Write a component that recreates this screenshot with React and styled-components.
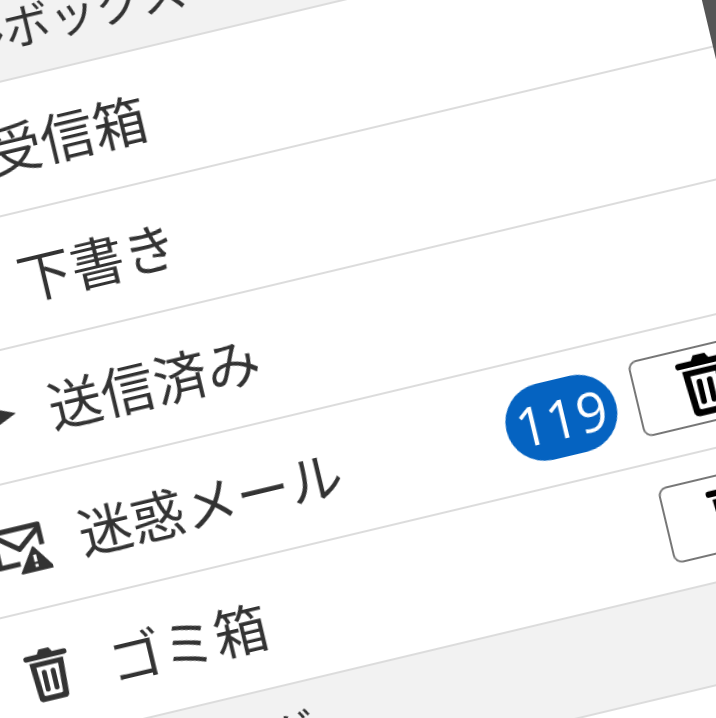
import React from 'react';
import styled, { createGlobalStyle } from 'styled-components';

const GlobalStyle = createGlobalStyle`
  html, body {
    margin: 0;
    padding: 0;
    background: #555;
  }
`;

const Stage = styled.div`
  width: 716px;
  height: 718px;
  overflow: hidden;
  background: #555;
`;

// the whole phone photo is tilted, everything inside is normal flow
const Panel = styled.div`
  width: 894px;
  height: 1000px;
  background: #fff;
  transform-origin: 0 0;
  transform: translate(-210px, 30px) rotate(-13.4deg);
  filter: blur(0.5px);
  font-family: "Noto Sans CJK JP", "Noto Sans", sans-serif;
  color: #333;
`;

const SectionHeader = styled.div`
  height: 100px;
  display: flex;
  align-items: center;
  padding: 0 0 6px 67px;
  background: #f2f2f2;
  border-bottom: 2px solid #dcdcdc;
  box-sizing: border-box;
  font-size: 47px;
`;

const Row = styled.div`
  height: 130.5px;
  display: flex;
  align-items: center;
  padding: 0 15px 0 58px;
  background: #fff;
  border-bottom: 2px solid #dcdcdc;
  box-sizing: border-box;
`;

const IconSlot = styled.div`
  width: 90px;
  display: flex;
  justify-content: center;
  flex-shrink: 0;
  color: #333;
`;

const Label = styled.span`
  margin-left: 16px;
  font-size: 54px;
  flex: 1;
`;

const Badge = styled.span`
  display: flex;
  align-items: center;
  justify-content: center;
  width: 113px;
  height: 78px;
  border-radius: 39px;
  background: #0563c1;
  color: #fff;
  font-family: "Open Sans", sans-serif;
  font-size: 54px;
`;

const TrashButton = styled.button`
  width: 142px;
  height: 78px;
  margin-left: 20px;
  display: flex;
  align-items: center;
  justify-content: center;
  background: #fff;
  color: #000;
  border: 2px solid #777;
  border-radius: 9px;
  padding: 0;
`;

const TrashIcon = ({ size = 65 }) => (
  <svg width={size} height={size} viewBox="0 0 24 24" fill="currentColor">
    <path d="M9.800 1h4.400l1.100 1.900h5a1.100 1.100 0 0 1 0 2.300H3.700a1.100 1.100 0 0 1 0-2.300h5z" />
    <path
      d="M4.600 6.200h14.800l-.9 15.400a2 2 0 0 1-2 1.900H7.500a2 2 0 0 1-2-1.900zM7.200 8.400l.7 12c0 .4.300.7.700.7h6.800c.4 0 .7-.3.700-.7l.7-12z"
      fillRule="evenodd"
    />
    <rect x="9" y="10" width="2.100" height="9.500" rx="1" />
    <rect x="12.900" y="10" width="2.100" height="9.500" rx="1" />
  </svg>
);

const SendIcon = () => (
  <svg width="56" height="56" viewBox="0 0 24 24" fill="currentColor">
    <path d="M3 3l21 9-21 9 2.500-7.500L15 12 5.500 10.500z" />
  </svg>
);

const SpamIcon = () => (
  <svg width="58" height="58" viewBox="0 0 24 24" fill="none" stroke="currentColor" strokeWidth="2.100">
    <path d="M11 19H2.500V4.500h19V13" strokeLinejoin="round" />
    <path d="M3 6l9 7 9-7" strokeLinejoin="round" />
    <path d="M17.500 13.500L24 23H11z" fill="currentColor" strokeWidth="1" strokeLinejoin="round" />
    <path d="M17.500 16.500v3M17.500 20.500v1.200" stroke="#fff" strokeWidth="1.300" />
  </svg>
);

const InboxIcon = () => (
  <svg width="56" height="56" viewBox="0 0 24 24" fill="none" stroke="currentColor" strokeWidth="2">
    <path d="M3 13l3-9h12l3 9v7H3zM3 13h5l2 3h4l2-3h5" />
  </svg>
);

const DraftIcon = () => (
  <svg width="56" height="56" viewBox="0 0 24 24" fill="none" stroke="currentColor" strokeWidth="2">
    <path d="M4 20l1-5L16 4l4 4L9 19z" />
  </svg>
);

const App = () => (
  <Stage>
    <GlobalStyle />
    <Panel>
      <SectionHeader>メールボックス</SectionHeader>
      <Row>
        <IconSlot><InboxIcon /></IconSlot>
        <Label>受信箱</Label>
      </Row>
      <Row>
        <IconSlot><DraftIcon /></IconSlot>
        <Label>下書き</Label>
      </Row>
      <Row>
        <IconSlot><SendIcon /></IconSlot>
        <Label>送信済み</Label>
      </Row>
      <Row>
        <IconSlot><SpamIcon /></IconSlot>
        <Label>迷惑メール</Label>
        <Badge>119</Badge>
        <TrashButton><TrashIcon /></TrashButton>
      </Row>
      <Row>
        <IconSlot><TrashIcon size={56} /></IconSlot>
        <Label>ゴミ箱</Label>
        <TrashButton><TrashIcon /></TrashButton>
      </Row>
      <SectionHeader>マイフォルダ</SectionHeader>
    </Panel>
  </Stage>
);

export default App;
